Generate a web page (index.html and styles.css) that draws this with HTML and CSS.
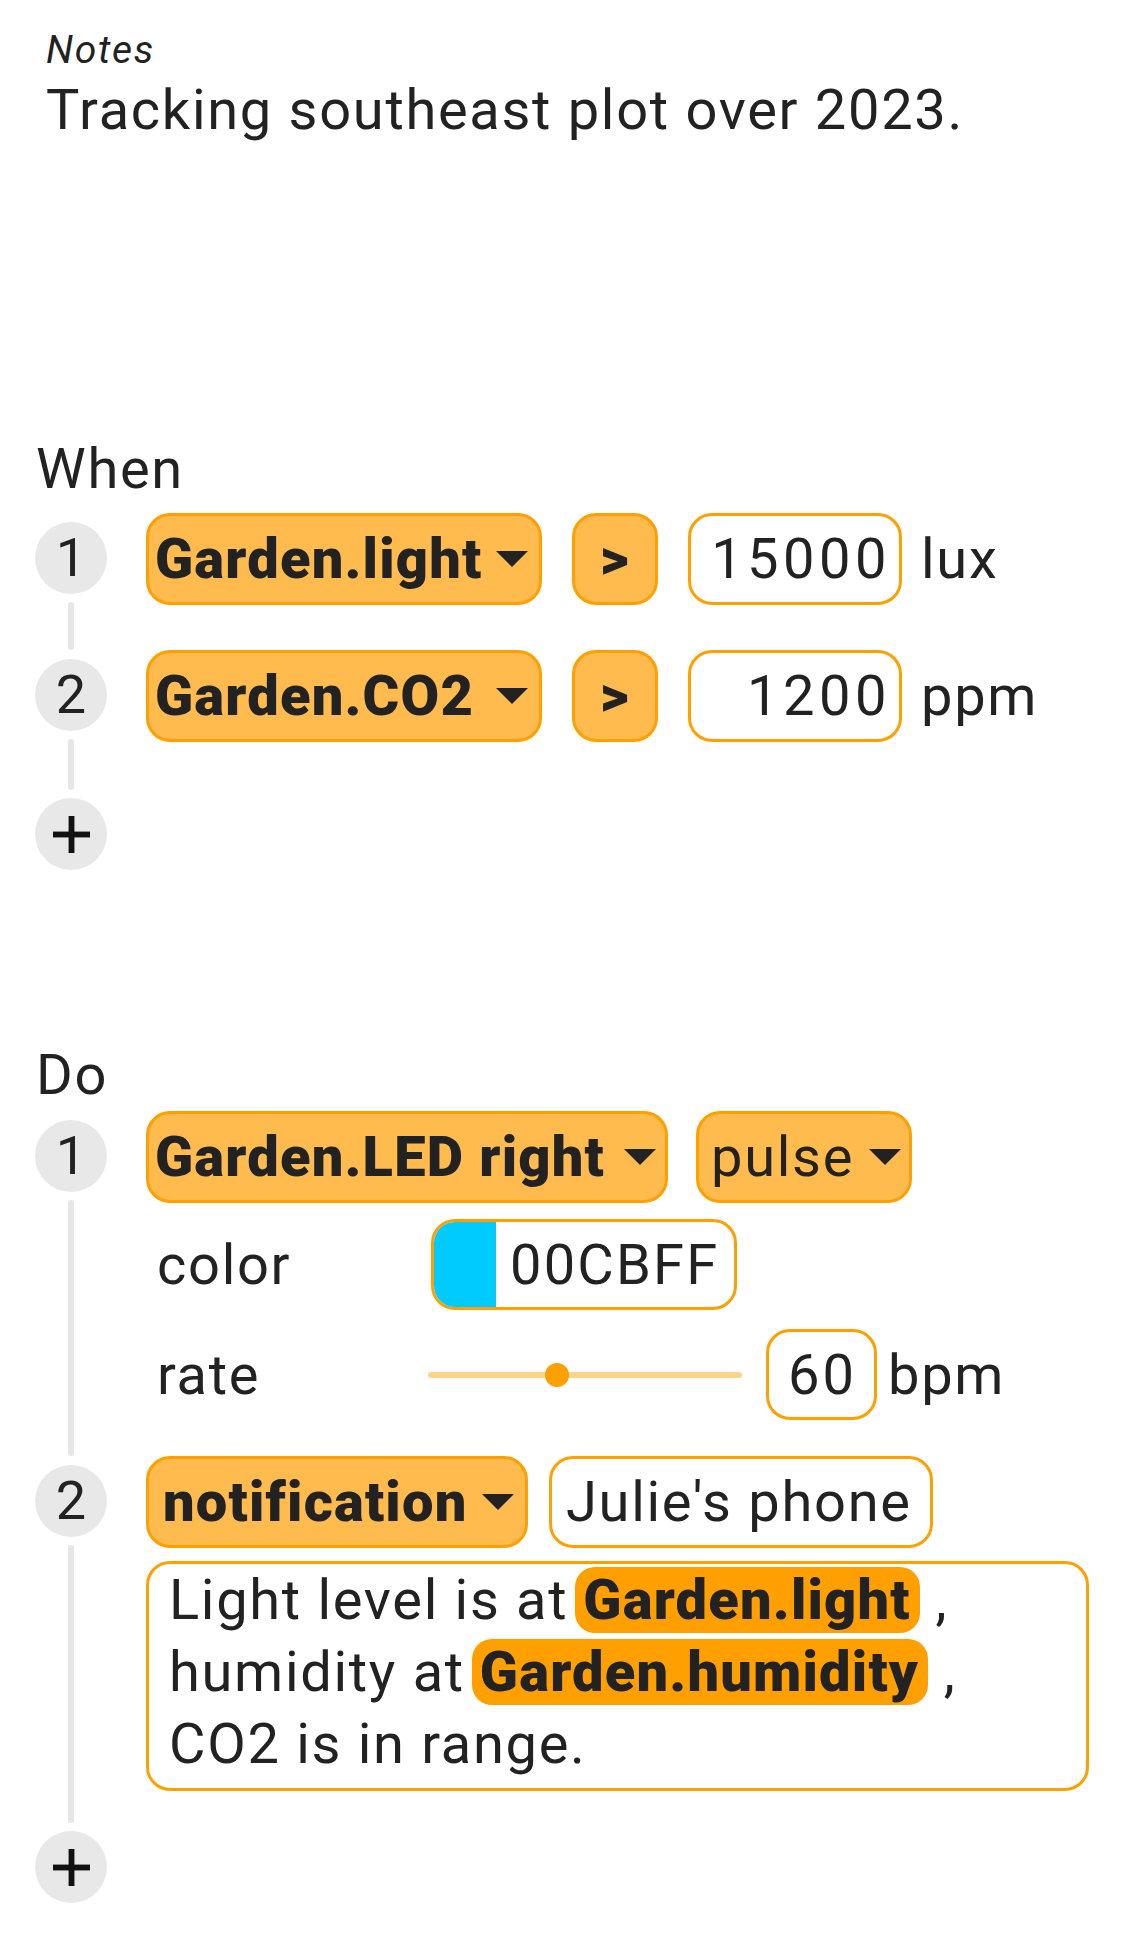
FILE: index.html
```html
<!DOCTYPE html>
<html lang="en">
<head>
<meta charset="utf-8">
<title>Automation</title>
<link rel="stylesheet" href="styles.css">
</head>
<body>
<main class="page">
  <section class="notes">
    <div class="notes-label">Notes</div>
    <div class="notes-text">Tracking southeast plot over 2023.</div>
  </section>

  <section class="block block-when">
    <h2 class="block-title">When</h2>
    <div class="steps steps-when">
      <div class="step step-w1">
        <div class="rail"><div class="badge">1</div><div class="line"></div></div>
        <div class="step-body">
          <div class="cond">
            <div class="pill pill-var">Garden.light<svg class="caret" viewBox="0 0 34 18"><polygon points="1,1 33,1 17,17"/></svg></div>
            <div class="pill pill-op">&gt;</div>
            <div class="field field-num">15000</div>
            <div class="unit">lux</div>
          </div>
        </div>
      </div>
      <div class="step step-w2">
        <div class="rail"><div class="badge">2</div><div class="line line-end"></div></div>
        <div class="step-body">
          <div class="cond">
            <div class="pill pill-var">Garden.CO2<svg class="caret" viewBox="0 0 34 18"><polygon points="1,1 33,1 17,17"/></svg></div>
            <div class="pill pill-op">&gt;</div>
            <div class="field field-num">1200</div>
            <div class="unit">ppm</div>
          </div>
        </div>
      </div>
      <div class="step step-add">
        <div class="rail rail-add"><div class="badge badge-add"><svg class="plus" viewBox="0 0 38 38"><rect x="0" y="16" width="38" height="6"/><rect x="16" y="0" width="6" height="38"/></svg></div></div>
      </div>
    </div>
  </section>

  <section class="block block-do">
    <h2 class="block-title">Do</h2>
    <div class="steps steps-do">
      <div class="step step-d1">
        <div class="rail"><div class="badge">1</div><div class="line"></div></div>
        <div class="step-body">
          <div class="action">
            <div class="pill pill-auto pill-led">Garden.LED right<svg class="caret" viewBox="0 0 34 18"><polygon points="1,1 33,1 17,17"/></svg></div>
            <div class="pill pill-auto pill-light pill-pulse">pulse<svg class="caret" viewBox="0 0 34 18"><polygon points="1,1 33,1 17,17"/></svg></div>
          </div>
          <div class="param param-color">
            <div class="param-label">color</div>
            <div class="color-field"><div class="swatch"></div><div class="color-hex">00CBFF</div></div>
          </div>
          <div class="param param-rate">
            <div class="param-label">rate</div>
            <div class="slider"><div class="track track-fill"></div><div class="thumb"></div><div class="track"></div></div>
            <div class="field field-rate">60</div>
            <div class="unit unit-bpm">bpm</div>
          </div>
        </div>
      </div>
      <div class="step step-d2">
        <div class="rail"><div class="badge">2</div><div class="line line-end"></div></div>
        <div class="step-body">
          <div class="action">
            <div class="pill pill-auto pill-notif">notification<svg class="caret" viewBox="0 0 34 18"><polygon points="1,1 33,1 17,17"/></svg></div>
            <div class="field field-text">Julie's phone</div>
          </div>
          <div class="message">Light level is at<span class="token">Garden.light</span> ,<br>humidity at<span class="token">Garden.humidity</span> ,<br>CO2 is in range.</div>
        </div>
      </div>
      <div class="step step-add">
        <div class="rail rail-add"><div class="badge badge-add"><svg class="plus" viewBox="0 0 38 38"><rect x="0" y="16" width="38" height="6"/><rect x="16" y="0" width="6" height="38"/></svg></div></div>
      </div>
    </div>
  </section>
</main>
</body>
</html>
```

FILE: styles.css
```css
* { box-sizing: border-box; }

html, body {
  margin: 0;
  background: #ffffff;
}

body {
  color: #222222;
  font-family: Roboto, "Liberation Sans", sans-serif;
  font-size: 56px;
  letter-spacing: 1.7px;
}

.page {
  width: 1125px;
  padding-bottom: 30px;
}

/* Notes */
.notes {
  padding: 27px 0 0 46px;
}
.notes-label {
  font-size: 39px;
  font-style: italic;
  line-height: 46px;
}
.notes-text {
  margin-top: 5px;
  font-size: 56px;
  line-height: 64px;
}

/* Blocks */
.block {
  padding-left: 35px;
}
.block-when { margin-top: 295px; }
.block-do { margin-top: 173px; }

.block-title {
  margin: 0;
  padding-left: 1px;
  font-size: 56px;
  font-weight: 400;
  line-height: 64px;
}
.steps-when { margin-top: 12px; }
.steps-do { margin-top: 4px; }

/* Steps */
.step {
  display: flex;
  align-items: stretch;
}
.rail {
  width: 72px;
  flex: 0 0 72px;
  display: flex;
  flex-direction: column;
  align-items: center;
  padding-top: 9px;
}
.rail-add { padding-top: 0; }
.badge {
  width: 72px;
  height: 72px;
  flex: 0 0 72px;
  border-radius: 50%;
  background: #e8e8e8;
  display: flex;
  align-items: center;
  justify-content: center;
  font-size: 54px;
  letter-spacing: 0;
  line-height: 1;
}
.plus {
  width: 37px;
  height: 37px;
  fill: #111111;
}
.line {
  width: 6px;
  flex: 1 1 auto;
  margin-top: 8px;
  border-radius: 3px;
  background: #e6e6e6;
}
.line-end { margin-bottom: 8px; }

.step-body {
  margin-left: 39px;
  flex: 1 1 auto;
}
.step-w1 .step-body { padding-bottom: 45px; }
.step-w2 .step-body { padding-bottom: 56px; }
.step-d1 .step-body { padding-bottom: 36px; }
.step-d2 .step-body { padding-bottom: 40px; }

/* Pills and fields */
.cond, .action {
  display: flex;
  align-items: center;
  height: 92px;
}
.pill {
  height: 92px;
  display: flex;
  align-items: center;
  border: 3px solid #ffa000;
  border-radius: 24px;
  background: #ffbb4d;
  font-weight: 900;
  letter-spacing: 1.2px;
  white-space: nowrap;
}
.caret {
  width: 34px;
  height: 18px;
  flex: 0 0 34px;
  fill: #222222;
}
.pill-var {
  width: 396px;
  padding: 0 10px 0 6px;
  justify-content: space-between;
}
.pill-op {
  width: 86px;
  margin-left: 30px;
  justify-content: center;
}
.pill-auto {
  padding: 0 8px 0 6px;
  justify-content: space-between;
}
.pill-auto .caret { margin-left: 14px; }
.pill-led { width: 522px; }
.pill-light {
  font-weight: 400;
  letter-spacing: 1.7px;
}
.pill-pulse {
  width: 216px;
  margin-left: 28px;
  padding-left: 12px;
  padding-right: 10px;
}
.pill-notif {
  width: 382px;
  padding-left: 14px;
  padding-right: 12px;
}
.field {
  height: 92px;
  display: flex;
  align-items: center;
  border: 3px solid #ffa000;
  border-radius: 24px;
  background: #ffffff;
  white-space: nowrap;
}
.field-num {
  width: 214px;
  margin-left: 30px;
  justify-content: flex-end;
  padding-right: 8px;
  letter-spacing: 4.5px;
}
.unit {
  margin-left: 19px;
}
.field-text {
  width: 384px;
  margin-left: 21px;
  padding-left: 14px;
}

/* Parameters */
.param {
  display: flex;
  align-items: center;
  height: 91px;
  padding-left: 11px;
}
.param-color { margin-top: 16px; }
.param-rate { margin-top: 19px; }
.param-label {
  width: 274px;
  flex: 0 0 274px;
}
.color-field {
  width: 306px;
  height: 91px;
  display: flex;
  align-items: stretch;
  border: 3px solid #ffa000;
  border-radius: 24px;
  overflow: hidden;
  background: #ffffff;
}
.swatch {
  width: 62px;
  background: #00cbff;
}
.color-hex {
  display: flex;
  align-items: center;
  padding-left: 14px;
  letter-spacing: 2.2px;
}
.slider {
  width: 314px;
  margin-left: -3px;
  display: flex;
  align-items: center;
}
.track {
  flex: 1 1 auto;
  height: 6px;
  border-radius: 3px;
  background: #ffd38c;
}
.track-fill {
  flex: 0 0 120px;
  margin-right: -3px;
}
.thumb {
  width: 24px;
  height: 24px;
  flex: 0 0 24px;
  border-radius: 50%;
  background: #ffa000;
  position: relative;
  z-index: 1;
  margin-right: -3px;
}
.field-rate {
  width: 111px;
  height: 91px;
  margin-left: 24px;
  justify-content: center;
  letter-spacing: 3px;
  padding-left: 2px;
}
.unit-bpm { margin-left: 11px; }

/* Message */
.message {
  width: 943px;
  margin-top: 13px;
  padding: 0 20px 8px;
  border: 3px solid #ffa000;
  border-radius: 24px;
  line-height: 72px;
}
.token {
  margin-left: 7px;
  background: #ffa000;
  border-radius: 20px;
  padding: 0 9px 0 8px;
  font-weight: 900;
  letter-spacing: 1.2px;
}
```
